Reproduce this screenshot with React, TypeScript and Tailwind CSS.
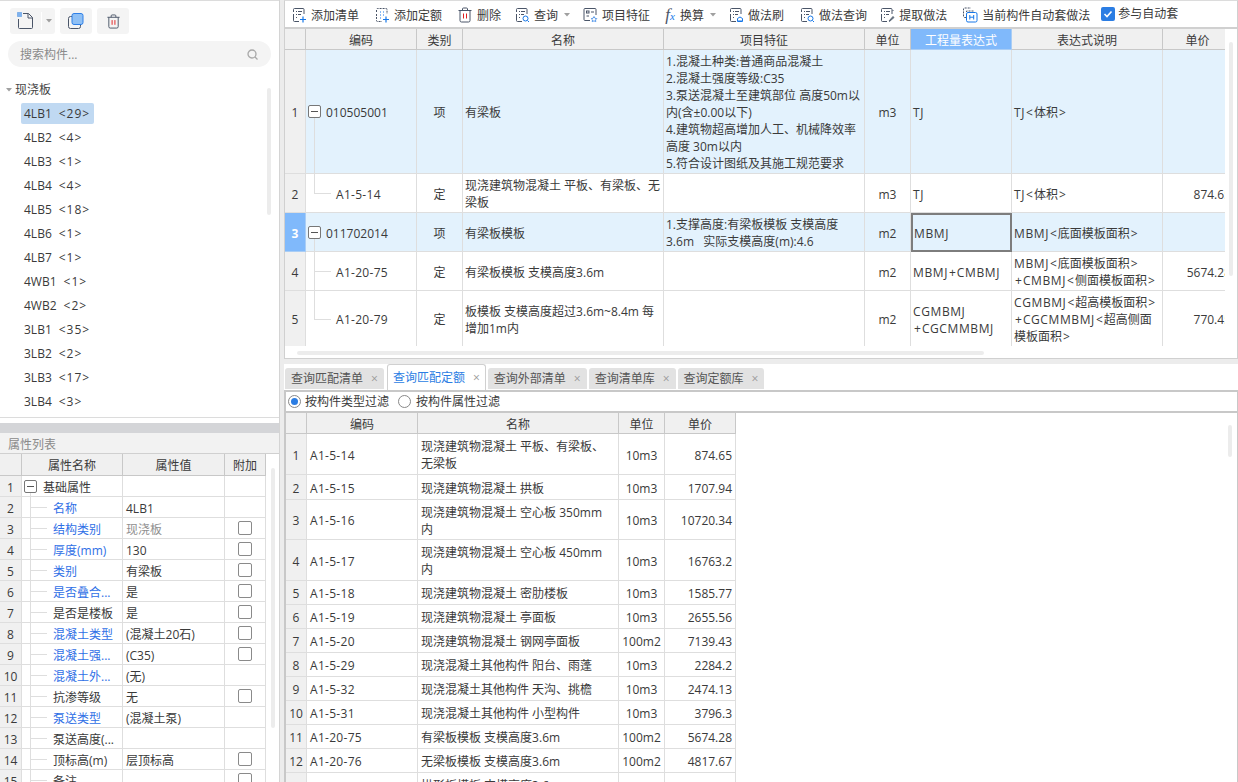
import { ReactNode } from "react";

const font = { fontFamily: '"Open Sans", "Noto Sans CJK SC", sans-serif' };

// ---- icons ----
const Ic = ({ children, w = 16 }: { children: ReactNode; w?: number }) => (
    <svg width={w} height="16" viewBox="0 0 16 16" fill="none" stroke="#4a5568" strokeWidth="1" className="shrink-0">
        {children}
    </svg>
);

const DocLines = () => (
    <>
        <path d="M2.5 5V2.5a1 1 0 0 1 1-1h8.500a1 1 0 0 1 1 1V7M2.500 7v6.500a1 1 0 0 0 1 1H8" />
        <path d="M5 4.500h1M7 4.500h4M5 7.500h1M7 7.500h3M5 10.500h1" stroke="#4a5568" />
    </>
);

const AddListIcon = () => (
    <Ic>
        <DocLines />
        <path d="M9 12.500h6M12 9.500v6" stroke="#1677e8" strokeWidth="1.200" />
    </Ic>
);
const AddQuotaIcon = () => (
    <Ic>
        <path d="M2.500 5V2.500a1 1 0 0 1 1-1h8.500a1 1 0 0 1 1 1V7M2.500 7v6.500a1 1 0 0 0 1 1H8" strokeDasharray="2 1" />
        <path d="M6 5h1M9 5h1M6 8h1M9 8h1M6 11h1" stroke="#1677e8" />
        <path d="M9 12.500h6M12 9.500v6" stroke="#1677e8" strokeWidth="1.200" />
    </Ic>
);
const TrashIcon = ({ size = 16 }: { size?: number }) => (
    <svg width={size} height={size} viewBox="0 0 16 16" fill="none" stroke="#4a5568" strokeWidth="1" className="shrink-0">
        <path d="M1.500 3.500h13M5.500 3.500V2a1 1 0 0 1 1-1h3a1 1 0 0 1 1 1v1.500" />
        <path d="M3 3.500v10a1.500 1.500 0 0 0 1.500 1.500h7a1.500 1.500 0 0 0 1.500-1.500v-10" />
        <path d="M6.500 6.500v5M9.500 6.500v5" stroke="#e02020" />
    </svg>
);
const QueryIcon = () => (
    <Ic>
        <DocLines />
        <circle cx="11.500" cy="11.500" r="2.500" stroke="#1677e8" />
        <path d="M13.500 13.500l1.500 1.500" stroke="#1677e8" />
    </Ic>
);
const FeatureIcon = () => (
    <Ic>
        <path d="M8 13.500H3a1 1 0 0 1-1-1V2.500a1 1 0 0 1 1-1h10a1 1 0 0 1 1 1V8" />
        <rect x="4.500" y="4" width="2.500" height="2" />
        <path d="M9 5h3M4.500 9h2.500" />
        <path d="M12 9.500l1 1.800 1.800.3-1.300 1.300.3 1.800-1.800-.9-1.800.9.3-1.800-1.300-1.300 1.800-.3z" stroke="#5b9bea" />
    </Ic>
);
const BrushIcon = () => (
    <Ic>
        <DocLines />
        <path d="M9.500 14.500v-3l2.500-1.500 2.500 1.500v3z" stroke="#1677e8" />
        <path d="M11 14.500v-1.500M13 14.500v-1.500" stroke="#1677e8" />
    </Ic>
);
const ExtractIcon = () => (
    <Ic>
        <DocLines />
        <path d="M10 14l4-4.500 1 1-4.500 4z" fill="#5f6b7a" stroke="#5f6b7a" />
        <path d="M13.500 3l1 1" />
    </Ic>
);
const AutoIcon = () => (
    <Ic>
        <path d="M4 10.500H2.500a1 1 0 0 1-1-1V2a1 1 0 0 1 1-1H9" strokeDasharray="2 1" />
        <path d="M4.500 5V4h7" strokeDasharray="2 1" />
        <rect x="4.500" y="5.500" width="10.500" height="9.500" rx="1.500" stroke="#1677e8" />
        <path d="M7.800 8v4.500M11.700 8v4.500M7.800 10.200h3.900" stroke="#1677e8" />
    </Ic>
);
const Caret = () => (
    <svg width="6" height="4" viewBox="0 0 6 4" className="shrink-0">
        <path d="M0 0h6L3 3.500z" fill="#a0a0a0" />
    </svg>
);
const MinusBox = () => (
    <span className="relative z-10 flex h-[13px] w-[13px] shrink-0 items-center justify-center rounded-[2px] border border-[#777] bg-white">
        <span className="h-px w-[7px] bg-[#555]" />
    </span>
);
const Check = () => <span className="mx-auto block h-[14px] w-[14px] rounded-[2px] border border-[#8a8a8a] bg-white" />;

const ToolItem = ({ icon, label, caret }: { icon: ReactNode; label: string; caret?: boolean }) => (
    <div className="flex shrink-0 items-center gap-[4px]">
        {icon}
        <span>{label}</span>
        {caret && <span className="ml-[2px] flex"><Caret /></span>}
    </div>
);

// 尖括号、加号和大写字母在原图里更宽
const Wide = ({ text }: { text: string }) => (
    <>
        {text.split(/([A-Z]+|[<>+])/).map((part, i) =>
            /^[<>+]$/.test(part) ? (
                <span key={i} className="mx-[1px]">{part}</span>
            ) : /^[A-Z]+$/.test(part) ? (
                <span key={i} className="tracking-[0.6px]">{part}</span>
            ) : (
                part
            )
        )}
    </>
);

// ---- data ----
const treeItems: [string, string][] = [
    ["4LB1", "<29>"], ["4LB2", "<4>"], ["4LB3", "<1>"], ["4LB4", "<4>"], ["4LB5", "<18>"], ["4LB6", "<1>"], ["4LB7", "<1>"],
    ["4WB1", "<1>"], ["4WB2", "<2>"], ["3LB1", "<35>"], ["3LB2", "<2>"], ["3LB3", "<17>"], ["3LB4", "<3>"],
];

const props: { name: string; value: string; blue?: boolean; check?: boolean; gray?: boolean }[] = [
    { name: "名称", value: "4LB1", blue: true },
    { name: "结构类别", value: "现浇板", blue: true, check: true, gray: true },
    { name: "厚度(mm)", value: "130", blue: true, check: true },
    { name: "类别", value: "有梁板", blue: true, check: true },
    { name: "是否叠合...", value: "是", blue: true, check: true },
    { name: "是否是楼板", value: "是", check: true },
    { name: "混凝土类型", value: "(混凝土20石)", blue: true, check: true },
    { name: "混凝土强...", value: "(C35)", blue: true, check: true },
    { name: "混凝土外...", value: "(无)", blue: true },
    { name: "抗渗等级", value: "无", check: true },
    { name: "泵送类型", value: "(混凝土泵)", blue: true },
    { name: "泵送高度(...", value: "" },
    { name: "顶标高(m)", value: "层顶标高", check: true },
    { name: "备注", value: "", check: true },
];

const topRows = [
    { h: "h-[124px]", sel: true, code: "010505001", kind: "项", name: "有梁板", feat: "1.混凝土种类:普通商品混凝土\n2.混凝土强度等级:C35\n3.泵送混凝土至建筑部位 高度50m以内(含±0.00以下)\n4.建筑物超高增加人工、机械降效率 高度 30m以内\n5.符合设计图纸及其施工规范要求", unit: "m3", expr: "TJ", desc: "TJ<体积>", price: "" },
    { h: "h-[39px]", code: "A1-5-14", kind: "定", name: "现浇建筑物混凝土 平板、有梁板、无梁板", feat: "", unit: "m3", expr: "TJ", desc: "TJ<体积>", price: "874.65", line: "end" },
    { h: "h-[39px]", sel: true, cur: true, code: "011702014", kind: "项", name: "有梁板模板", feat: "1.支撑高度:有梁板模板 支模高度\n3.6m   实际支模高度(m):4.6", unit: "m2", expr: "MBMJ", desc: "MBMJ<底面模板面积>", price: "" },
    { h: "h-[39px]", code: "A1-20-75", kind: "定", name: "有梁板模板 支模高度3.6m", feat: "", unit: "m2", expr: "MBMJ+CMBMJ", desc: "MBMJ<底面模板面积>\n+CMBMJ<侧面模板面积>", price: "5674.28", line: "mid" },
    { h: "h-[56px]", code: "A1-20-79", kind: "定", name: "板模板 支模高度超过3.6m~8.4m 每增加1m内", feat: "", unit: "m2", expr: "CGMBMJ\n+CGCMMBMJ", desc: "CGMBMJ<超高模板面积>\n+CGCMMBMJ<超高侧面\n模板面积>", price: "770.45", line: "end" },
];

const quotaRows = [
    ["A1-5-14", "现浇建筑物混凝土 平板、有梁板、\n无梁板", "10m3", "874.65", "h-[41px]"],
    ["A1-5-15", "现浇建筑物混凝土 拱板", "10m3", "1707.94", "h-[25px]"],
    ["A1-5-16", "现浇建筑物混凝土 空心板 350mm\n内", "10m3", "10720.34", "h-[40px]"],
    ["A1-5-17", "现浇建筑物混凝土 空心板 450mm\n内", "10m3", "16763.2", "h-[41px]"],
    ["A1-5-18", "现浇建筑物混凝土 密肋楼板", "10m3", "1585.77", "h-[24px]"],
    ["A1-5-19", "现浇建筑物混凝土 亭面板", "10m3", "2655.56", "h-[24px]"],
    ["A1-5-20", "现浇建筑物混凝土 钢网亭面板", "100m2", "7139.43", "h-[24px]"],
    ["A1-5-29", "现浇混凝土其他构件 阳台、雨蓬", "10m3", "2284.2", "h-[24px]"],
    ["A1-5-32", "现浇混凝土其他构件 天沟、挑檐", "10m3", "2474.13", "h-[24px]"],
    ["A1-5-31", "现浇混凝土其他构件 小型构件", "10m3", "3796.3", "h-[24px]"],
    ["A1-20-75", "有梁板模板 支模高度3.6m", "100m2", "5674.28", "h-[24px]"],
    ["A1-20-76", "无梁板模板 支模高度3.6m", "100m2", "4817.67", "h-[24px]"],
    ["", "拱形板模板 支模高度3.6m", "", "", "h-[24px]"],
];

const tabs = ["查询匹配清单", "查询匹配定额", "查询外部清单", "查询清单库", "查询定额库"];

const th = "border-r border-b border-[#c8c8c8] bg-[#f0f0f0] p-0 pt-[2px] text-center font-normal";
const numCell = "border-r border-b border-[#dedede] bg-[#f0f0f0] p-0 pt-[2px] text-center font-normal";
const td = "border-r border-b border-[#dedede] px-[2px] pt-[2px] align-middle";
const tdq = "border-r border-b border-[#dedede] px-[3px] pt-[2px] align-middle";

export default function App() {
    return (
        <div className="flex h-[782px] w-[1238px] overflow-hidden bg-[#ececec] text-[12px] leading-[17px] text-[#3a3a3a]" style={font}>
            {/* 左侧 */}
            <div className="flex h-full w-[280px] shrink-0 flex-col border-r border-[#d4d4d4] bg-white">
                <div className="relative h-[418px] shrink-0 border-t border-b border-[#dcdcdc]">
                    <div className="box-content flex h-[26px] gap-[5px] pl-[10px] pt-[7px]">
                        <div className="flex h-[26px] w-[45px] items-center rounded-[3px] bg-[#f4f4f4]">
                            <span className="flex w-[32px] justify-center border-r border-white">
                                <svg width="18" height="18" viewBox="0 0 18 18" fill="none" stroke="#4a5568">
                                    <path d="M1.500 7v8.500a1 1 0 0 0 1 1h12a1 1 0 0 0 1-1V5.500L11.500 1.500H6" />
                                    <path d="M11 1.500v4.500h4.500" />
                                    <path d="M0.500 0.500h4v4h-4z" fill="#7fb2ee" stroke="#4a90e2" strokeDasharray="1 1" />
                                </svg>
                            </span>
                            <span className="flex flex-1 justify-center"><Caret /></span>
                        </div>
                        <div className="flex h-[26px] w-[32px] items-center justify-center rounded-[3px] bg-[#f4f4f4]">
                            <svg width="16" height="16" viewBox="0 0 16 16" fill="none">
                                <rect x="0.500" y="3.500" width="12" height="12" rx="2" stroke="#4a5568" />
                                <rect x="4" y="0.500" width="11" height="11" rx="2" fill="#8fc0f5" stroke="#2f80e8" />
                            </svg>
                        </div>
                        <div className="flex h-[26px] w-[32px] items-center justify-center rounded-[3px] bg-[#f4f4f4]">
                            <TrashIcon size={15} />
                        </div>
                    </div>
                    <div className="mx-[8px] mt-[7px] flex h-[26px] items-center justify-between rounded-full bg-[#f4f4f4] pl-[12px] pr-[13px] text-[#8a8a8a]">
                        <span>搜索构件...</span>
                        <svg width="11" height="11" viewBox="0 0 11 11" fill="none" stroke="#a8a8a8" strokeWidth="1.300">
                            <circle cx="5" cy="5" r="4" />
                            <path d="M8 8l2.500 2.500" />
                        </svg>
                    </div>
                    <div className="mt-[14px] flex h-[17px] items-center pl-[6px] text-[#444]">
                        <Caret />
                        <span className="ml-[3px]">现浇板</span>
                    </div>
                    <div className="mt-[3px] flex flex-col pl-[21px]">
                        {treeItems.map(([name, count], i) => (
                            <div key={name} className="flex h-[24px] items-center">
                                <span className={`flex h-[21px] items-center gap-[7px] rounded-[2px] pl-[3px] pr-[4px] ${i === 0 ? "bg-[#c0d9f2]" : ""}`}>
                                    <span>{name}</span>
                                    <span className="tracking-[1px]">{count}</span>
                                </span>
                            </div>
                        ))}
                    </div>
                    <span className="absolute left-[267px] top-[87px] h-[127px] w-[4px] rounded bg-[#ececec]" />
                </div>
                <div className="h-[5px] shrink-0 bg-white" />
                <div className="h-[10px] shrink-0 bg-[#d4d5d8]" />
                <div className="flex h-[21px] shrink-0 items-center border-b border-[#d0d0d0] bg-[#f2f2f2] pl-[8px] pt-[2px] text-[#8a8a8a]">属性列表</div>
                <div className="relative min-h-0 flex-1 overflow-hidden">
                    <table className="w-[266px] table-fixed border-separate border-spacing-0">
                        <colgroup>
                            <col className="w-[22px]" />
                            <col className="w-[101px]" />
                            <col className="w-[102px]" />
                            <col className="w-[41px]" />
                        </colgroup>
                        <thead>
                            <tr className="h-[22px]">
                                <th className={th} />
                                <th className={th}>属性名称</th>
                                <th className={th}>属性值</th>
                                <th className={th}>附加</th>
                            </tr>
                        </thead>
                        <tbody>
                            <tr className="h-[21px]">
                                <td className={numCell}>1</td>
                                <td className="relative border-r border-b border-[#dedede] px-[2px] align-middle">
                                    <span className="absolute left-[8px] top-1/2 h-1/2 w-px bg-[#dedede]" />
                                    <div className="flex items-center gap-[6px]"><MinusBox /><span className="pt-[2px]">基础属性</span></div>
                                </td>
                                <td className={td} />
                                <td className={td} />
                            </tr>
                            {props.map((p, i) => (
                                <tr key={p.name} className="h-[21px]">
                                    <td className={numCell}>{i + 2}</td>
                                    <td className={`${td} relative pl-[31px] whitespace-nowrap ${p.blue ? "text-[#2f6fe6]" : ""}`}>
                                        <span className="absolute left-[8px] top-0 h-full w-px bg-[#dedede]" />
                                        <span className="absolute left-[9px] top-[10px] h-px w-[16px] bg-[#dedede]" />
                                        {p.name}
                                    </td>
                                    <td className={`${td} whitespace-nowrap pl-[3px] ${p.gray ? "text-[#8f8f8f]" : ""}`}>{p.value}</td>
                                    <td className="border-r border-b border-[#dedede] px-[2px] align-middle">{p.check && <Check />}</td>
                                </tr>
                            ))}
                        </tbody>
                    </table>
                    <span className="absolute left-[271px] top-[14px] h-[260px] w-[4px] rounded bg-[#ececec]" />
                </div>
            </div>

            {/* 右侧 */}
            <div className="ml-[4px] flex h-full min-w-0 flex-1 flex-col">
                <div className="flex h-[359px] shrink-0 flex-col border border-[#d0d0d0] border-t-[#dcdcdc] bg-white">
                    <div className="flex h-[28px] shrink-0 items-center gap-[15px] overflow-hidden border-b-2 border-[#d0d0d0] pl-[6px] pt-[2px]">
                        <ToolItem icon={<AddListIcon />} label="添加清单" />
                        <ToolItem icon={<AddQuotaIcon />} label="添加定额" />
                        <ToolItem icon={<TrashIcon />} label="删除" />
                        <div className="-ml-[2px]"><ToolItem icon={<QueryIcon />} label="查询" caret /></div>
                        <div className="-ml-[3px]"><ToolItem icon={<FeatureIcon />} label="项目特征" /></div>
                        <div className="-ml-[3px] flex shrink-0 items-center gap-[2px]">
                            <span className="w-[16px] text-center text-[17px] italic text-[#4a5568]" style={{ fontFamily: '"Liberation Serif", serif' }}>f<span className="text-[11px] text-[#1677e8]">x</span></span>
                            <span>换算</span>
                            <span className="ml-[4px] flex"><Caret /></span>
                        </div>
                        <div className="-ml-[3px]"><ToolItem icon={<BrushIcon />} label="做法刷" /></div>
                        <ToolItem icon={<QueryIcon />} label="做法查询" />
                        <div className="-ml-[3px]"><ToolItem icon={<ExtractIcon />} label="提取做法" /></div>
                        <ToolItem icon={<AutoIcon />} label="当前构件自动套做法" />
                        <div className="-ml-[4px] -mt-[3px] flex shrink-0 items-center gap-[3px]">
                            <span className="flex h-[14px] w-[14px] items-center justify-center rounded-[2px] bg-[#2b7de3]">
                                <svg width="10" height="10" viewBox="0 0 10 10" fill="none" stroke="#fff" strokeWidth="1.600">
                                    <path d="M1.500 5l2.500 2.500 4.500-5" />
                                </svg>
                            </span>
                            <span>参与自动套</span>
                        </div>
                    </div>

                    <div className="relative min-h-0 flex-1 overflow-hidden">
                        <div className="h-[317px] w-[940px] overflow-hidden">
                            <table className="w-[948px] table-fixed border-separate border-spacing-0">
                                <colgroup>
                                    <col className="w-[21px]" />
                                    <col className="w-[111px]" />
                                    <col className="w-[46px]" />
                                    <col className="w-[201px]" />
                                    <col className="w-[201px]" />
                                    <col className="w-[46px]" />
                                    <col className="w-[101px]" />
                                    <col className="w-[151px]" />
                                    <col className="w-[70px]" />
                                </colgroup>
                                <thead>
                                    <tr className="h-[21px]">
                                        <th className={th} />
                                        <th className={th}>编码</th>
                                        <th className={th}>类别</th>
                                        <th className={th}>名称</th>
                                        <th className={th}>项目特征</th>
                                        <th className={th}>单位</th>
                                        <th className="border-r border-b border-[#a9cdf5] bg-[#80b9fb] p-0 pt-[2px] text-center font-normal text-white">工程量表达式</th>
                                        <th className={th}>表达式说明</th>
                                        <th className={th}>单价</th>
                                    </tr>
                                </thead>
                                <tbody>
                                    {topRows.map((r, i) => {
                                        const bg = r.sel ? "bg-[#e3f2fd]" : "";
                                        return (
                                            <tr key={r.code} className={r.h}>
                                                <td className={r.cur ? "border-r border-b border-[#a9cdf5] bg-[#80b9fb] p-0 pt-[2px] text-center font-bold text-white" : numCell}>{i + 1}</td>
                                                <td className={`${r.kind === "项" ? "border-r border-b border-[#dedede] px-[2px] align-middle" : td} ${bg} relative`}>
                                                    {r.kind === "项" ? (
                                                        <>
                                                            <span className="absolute left-[8px] top-1/2 h-1/2 w-px bg-[#dedede]" />
                                                            <div className="flex items-center gap-[5px]"><MinusBox /><span className="pt-[2px]">{r.code}</span></div>
                                                        </>
                                                    ) : (
                                                        <>
                                                            <span className={`absolute left-[8px] top-0 w-px bg-[#dedede] ${r.line === "mid" ? "h-full" : "h-[calc(50%+1px)]"}`} />
                                                            <span className="absolute left-[8px] top-1/2 h-px w-[17px] bg-[#dedede]" />
                                                            <span className="pl-[28px] tracking-[0.3px]">{r.code}</span>
                                                        </>
                                                    )}
                                                </td>
                                                <td className={`${td} ${bg} text-center`}>{r.kind}</td>
                                                <td className={`${td} ${bg}`}>{r.name}</td>
                                                <td className={`${td} ${bg} whitespace-pre-wrap`}>{r.feat}</td>
                                                <td className={`${td} ${bg} text-center`}>{r.unit}</td>
                                                <td className={`${r.cur ? "border-2 border-[#7d7d7d] px-[1px] pt-[2px] align-middle" : td} ${bg} whitespace-pre-line`}><Wide text={r.expr} /></td>
                                                <td className={`${td} ${bg} whitespace-pre-line`}><Wide text={r.desc} /></td>
                                                <td className={`${td} ${bg} pr-[1px] text-right`}>{r.price}</td>
                                            </tr>
                                        );
                                    })}
                                </tbody>
                            </table>
                        </div>
                        <span className="absolute left-[12px] top-[322px] h-[4px] w-[687px] rounded bg-[#ececec]" />
                        <span className="absolute left-[944px] top-[13px] h-[234px] w-[4px] rounded bg-[#ececec]" />
                    </div>
                </div>

                <div className="mt-[5px] flex h-[26px] shrink-0 items-end gap-[2px] bg-white pl-[1px]">
                    {tabs.map((t, i) =>
                        i === 1 ? (
                            <div key={t} className="flex h-[26px] items-center gap-[8px] rounded-t-[3px] border border-b-0 border-[#d0d0d0] bg-white px-[5px] text-[#2b7de3]">
                                <span>{t}</span><span className="text-[12px] leading-none text-[#999]">×</span>
                            </div>
                        ) : (
                            <div key={t} className={`mb-[1px] flex h-[21px] items-center gap-[8px] rounded-t-[3px] bg-[#e2e2e2] px-[6px] text-[#555] ${i === 0 ? "mr-[1px]" : ""}`}>
                                <span>{t}</span><span className="text-[12px] leading-none text-[#999]">×</span>
                            </div>
                        )
                    )}
                </div>

                <div className="relative min-h-0 flex-1 overflow-hidden border-t-2 border-l-2 border-r border-[#c8c8c8] bg-white">
                    <div className="flex h-[21px] items-center gap-[5px] border-b-2 border-[#c8c8c8] pl-[2px]">
                        <span className="flex h-[13px] w-[13px] items-center justify-center rounded-full border border-[#888] bg-white">
                            <span className="h-[7px] w-[7px] rounded-full bg-[#2b7de3]" />
                        </span>
                        <span className="ml-[-1px] mr-[4px]">按构件类型过滤</span>
                        <span className="h-[13px] w-[13px] rounded-full border border-[#888] bg-white" />
                        <span>按构件属性过滤</span>
                    </div>
                    <table className="w-[450px] table-fixed border-separate border-spacing-0">
                        <colgroup>
                            <col className="w-[21px]" />
                            <col className="w-[111px]" />
                            <col className="w-[201px]" />
                            <col className="w-[46px]" />
                            <col className="w-[71px]" />
                        </colgroup>
                        <thead>
                            <tr className="h-[21px]">
                                <th className={th} />
                                <th className={th}>编码</th>
                                <th className={th}>名称</th>
                                <th className={th}>单位</th>
                                <th className={th}>单价</th>
                            </tr>
                        </thead>
                        <tbody>
                            {quotaRows.map((r, i) => (
                                <tr key={i} className={r[4]}>
                                    <td className={numCell}>{i + 1 < 13 ? i + 1 : ""}</td>
                                    <td className={`${tdq} tracking-[0.3px]`}>{r[0]}</td>
                                    <td className={`${tdq} whitespace-pre-line`}>{r[1]}</td>
                                    <td className={`${tdq} text-center`}>{r[2]}</td>
                                    <td className={`${tdq} text-right`}>{r[3]}</td>
                                </tr>
                            ))}
                        </tbody>
                    </table>
                    <span className="absolute left-[942px] top-[33px] h-[32px] w-[4px] rounded bg-[#ececec]" />
                </div>
            </div>
        </div>
    );
}
